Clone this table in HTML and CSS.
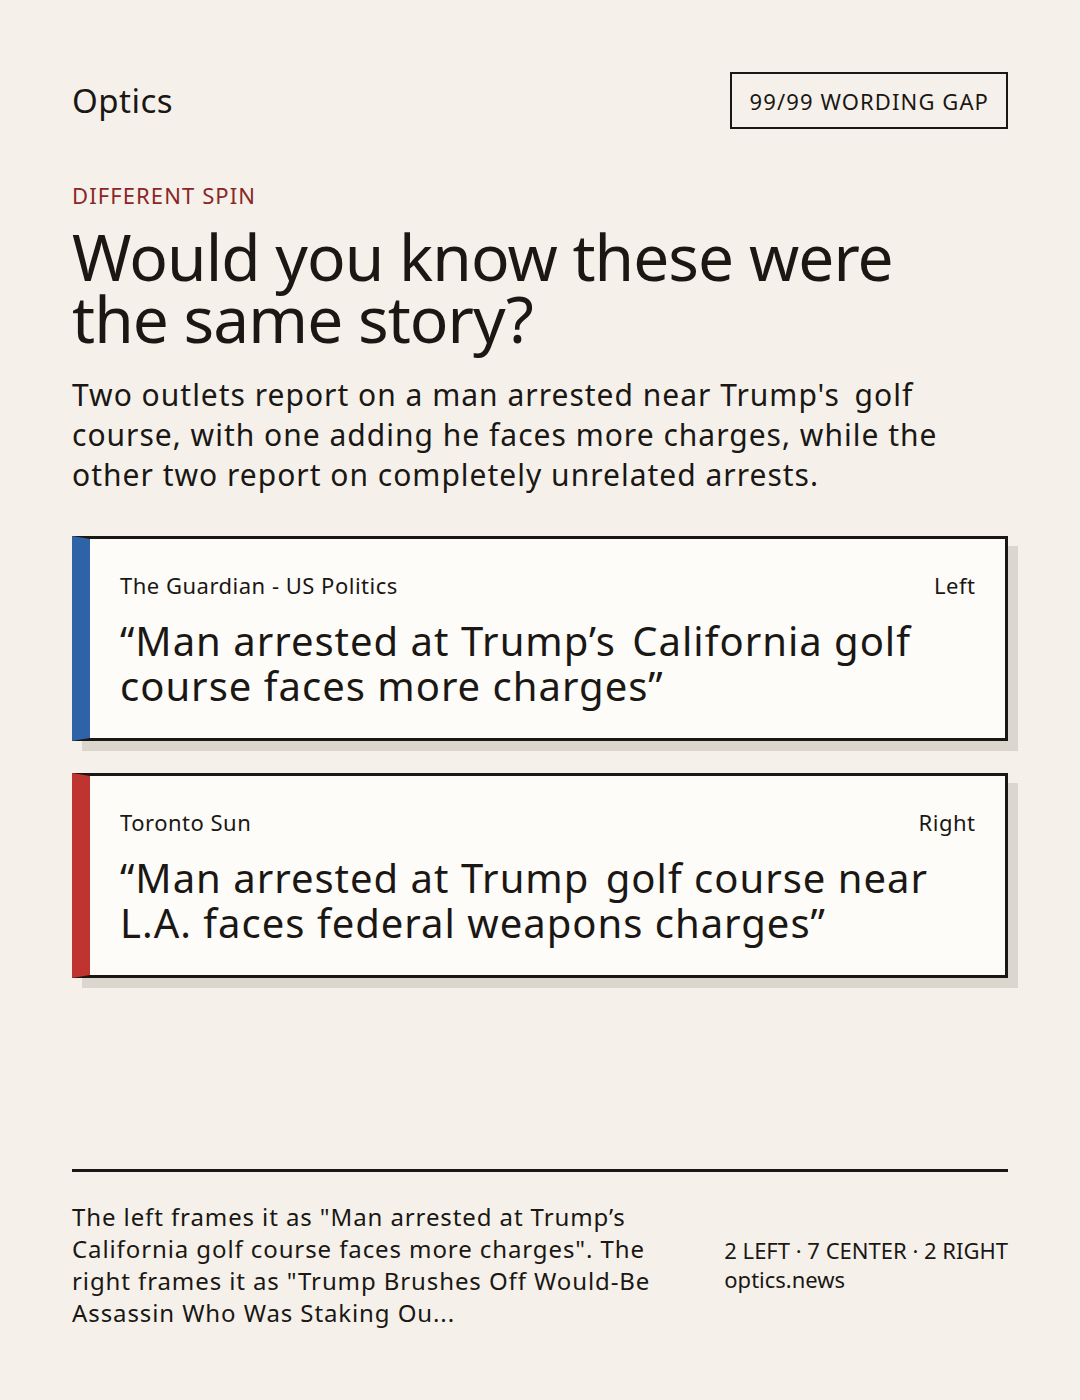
FILE: index.html
```html
<!DOCTYPE html>
<html lang="en">
<head>
<meta charset="utf-8">
<title>Optics</title>
<link rel="stylesheet" href="styles.css">
</head>
<body>
<main class="page">
  <header class="top">
    <div class="brand">Optics</div>
    <div class="badge">99/99 WORDING GAP</div>
  </header>

  <div class="kicker">DIFFERENT SPIN</div>
  <h1 class="title">Would you know these were the same story?</h1>
  <p class="dek">Two outlets report on a man arrested near Trump's&thinsp; golf course, with one adding he faces more charges, while the other two report on completely unrelated arrests.</p>

  <section class="cards">
    <article class="card card-left">
      <div class="card-meta">
        <span class="source">The Guardian - US Politics</span>
        <span class="lean">Left</span>
      </div>
      <p class="quote">“Man arrested at Trump’s&#8202; California golf course faces more charges”</p>
    </article>
    <article class="card card-right">
      <div class="card-meta">
        <span class="source">Toronto Sun</span>
        <span class="lean">Right</span>
      </div>
      <p class="quote">“Man arrested at Trump&#8202; golf course near L.A. faces federal weapons charges”</p>
    </article>
  </section>

  <footer class="foot">
    <p class="summary">The left frames it as "Man arrested at Trump’s California golf course faces more charges". The right frames it as "Trump Brushes Off Would-Be Assassin Who Was Staking Ou...</p>
    <div class="stats">
      <div>2 LEFT · 7 CENTER · 2 RIGHT</div>
      <div>optics.news</div>
    </div>
  </footer>
</main>
</body>
</html>
```

FILE: styles.css
```css
* { box-sizing: border-box; }

html, body {
  margin: 0;
  padding: 0;
  background: #f5f1ea;
}

body {
  font-family: "Noto Sans", "Open Sans", "DejaVu Sans", sans-serif;
  color: #1a1714;
}

.page {
  width: 1080px;
  height: 1400px;
  padding: 72px 72px 71px;
  display: flex;
  flex-direction: column;
}

.top {
  display: flex;
  justify-content: space-between;
  align-items: center;
  height: 57px;
  margin-bottom: 51px;
}

.brand {
  font-size: 33px;
  line-height: 40px;
  letter-spacing: 0.5px;
}

.badge {
  border: 2px solid #1a1714;
  height: 57px;
  padding: 0 17px 0 18px;
  display: flex;
  align-items: center;
  font-size: 22px;
  letter-spacing: 1.1px;
}

.kicker {
  color: #8a2626;
  font-size: 22px;
  line-height: 30px;
  letter-spacing: 1.1px;
  margin-bottom: 16px;
}

.title {
  margin: 0 0 25px;
  max-width: 900px;
  font-weight: 400;
  font-size: 64px;
  line-height: 62px;
  letter-spacing: -0.95px;
}

.dek {
  margin: 0 0 41px;
  font-size: 30px;
  line-height: 40px;
  letter-spacing: 1px;
}

.cards {
  display: flex;
  flex-direction: column;
  gap: 32px;
}

.card {
  background: #fdfcf8;
  border: 3px solid #1a1714;
  border-left: 18px solid #2e63a8;
  box-shadow: 10px 10px 0 #dbd7cf;
  padding: 31px 30px 29px 30px;
  height: 205px;
}

.card-right {
  border-left-color: #c0342f;
}

.card-meta {
  display: flex;
  justify-content: space-between;
  font-size: 22px;
  line-height: 30px;
  letter-spacing: 0.5px;
  margin-bottom: 18px;
}

.lean {
  margin-right: -0.5px;
}

.quote {
  margin: 0;
  font-size: 40px;
  line-height: 45px;
  letter-spacing: 1px;
}

.foot {
  margin-top: auto;
  border-top: 3px solid #1a1714;
  padding-top: 29px;
  display: flex;
  align-items: center;
  gap: 48px;
}

.summary {
  margin: 0;
  flex: 1;
  font-size: 24px;
  line-height: 32px;
  letter-spacing: 0.9px;
}

.stats {
  font-size: 22px;
  line-height: 29px;
  white-space: nowrap;
}
```
